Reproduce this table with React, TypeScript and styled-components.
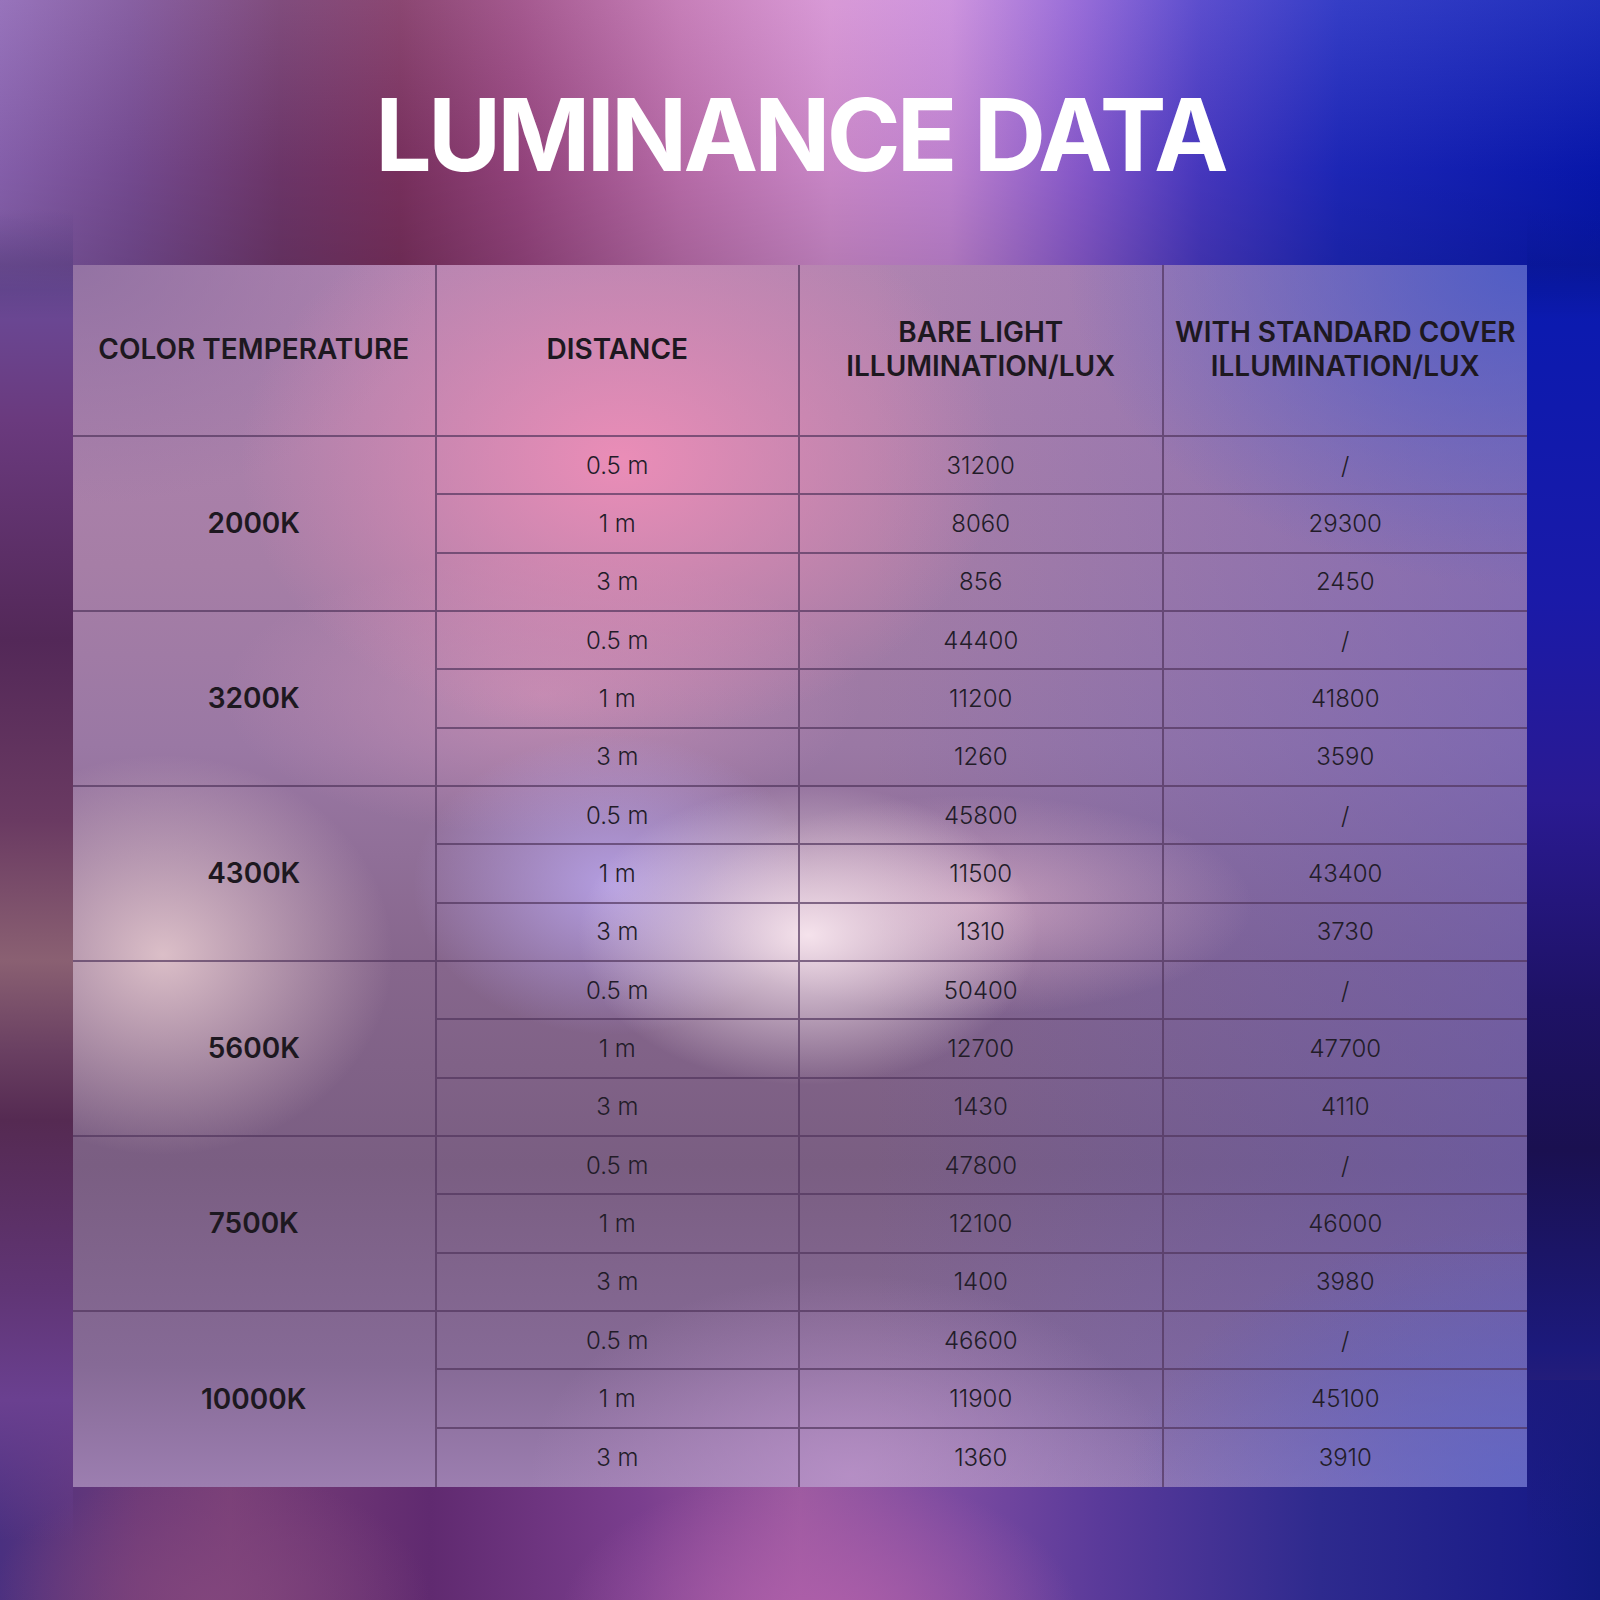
import React from 'react';
import styled, { createGlobalStyle } from 'styled-components';

const GlobalStyle = createGlobalStyle`
    html, body {
        margin: 0;
        padding: 0;
    }
    body {
        font-family: Inter, "Noto Sans", "Liberation Sans", sans-serif;
        color: #1f1a24;
    }
`;

// 背景：顶部横向彩带 + 左右两侧竖条 + 底部横带
const Page = styled.div`
    width: 1600px;
    height: 1600px;
    box-sizing: border-box;
    padding-top: 85px;
    display: flex;
    flex-direction: column;
    align-items: center;
    background:
        linear-gradient(180deg, rgba(255, 255, 255, 0.1) 0px, rgba(0, 0, 0, 0.06) 170px, rgba(0, 0, 0, 0.14) 265px, rgba(0, 0, 0, 0) 320px),
        linear-gradient(180deg, rgba(106, 74, 152, 0) 0 210px, #6a4a98 290px, #6a3a7e 420px, #532858 640px, #6a3a62 820px, #8a6072 960px, #6a4062 1050px, #552a52 1120px, #603575 1290px, #6a4090 1400px, rgba(90, 58, 134, 0) 1540px) left top / 73px 100% no-repeat,
        linear-gradient(180deg, rgba(10, 26, 176, 0) 0 210px, #0a1ab0 290px, #1a1aa8 600px, #2a1a92 800px, #1e1266 1000px, #1a1050 1150px, #1c1a7c 1350px, rgba(26, 32, 144, 0) 1540px) right top / 73px 100% no-repeat,
        radial-gradient(ellipse 260px 150px at 820px 1620px, rgba(175, 95, 170, 0.95), transparent),
        radial-gradient(ellipse 220px 130px at 210px 1600px, rgba(130, 70, 125, 0.9), transparent),
        linear-gradient(90deg, #4a3080 0px, #6e3a78 140px, #7a4078 230px, #602a70 430px, #7a3e8e 640px, #9c5aa0 800px, #7a4aa0 960px, #5a3a9a 1100px, #2e2a8e 1320px, #1a1c88 1530px, #121a80 1600px) left 1380px / 100% 220px no-repeat,
        linear-gradient(90deg, #8c64b4 0px, #7a4e98 130px, #72386e 280px, #7e3262 400px, #9a4682 520px, #c070b0 680px, #d48ed2 830px, #c888da 950px, #8c5cd4 1080px, #4a3ac8 1200px, #1e28c0 1340px, #0818b4 1600px) left top / 100% 320px no-repeat,
        #4a2a70;
`;

const Title = styled.h1`
    margin: 0 0 80px;
    font-family: Inter, "Liberation Sans", sans-serif;
    font-weight: 700;
    font-size: 100px;
    line-height: 1;
    letter-spacing: -3.8px;
    color: #ffffff;
    text-align: center;
`;

// 毛玻璃表格，颜色光斑直接画在表格背景上
const Table = styled.div`
    width: 1454px;
    display: grid;
    grid-template-columns: repeat(4, 1fr);
    grid-template-rows: 172px repeat(18, 58.33px);
    background:
        radial-gradient(ellipse 230px 150px at 735px 670px, rgba(250, 232, 240, 0.95), transparent),
        radial-gradient(ellipse 280px 110px at 900px 640px, rgba(236, 190, 212, 0.6), transparent),
        radial-gradient(ellipse 200px 150px at 540px 620px, rgba(186, 166, 238, 0.85), transparent),
        radial-gradient(ellipse 230px 200px at 90px 690px, rgba(234, 206, 210, 0.85), transparent),
        radial-gradient(ellipse 380px 280px at 547px 195px, rgba(238, 142, 184, 0.95), transparent),
        radial-gradient(ellipse 320px 140px at 470px 430px, rgba(214, 150, 186, 0.6), transparent),
        radial-gradient(ellipse 360px 240px at 0px 0px, rgba(140, 110, 160, 0.8), transparent),
        radial-gradient(ellipse 320px 200px at 777px 1210px, rgba(192, 150, 206, 0.7), transparent),
        radial-gradient(ellipse 460px 320px at 1454px 0px, rgba(70, 90, 200, 0.85), transparent),
        radial-gradient(ellipse 400px 260px at 1454px 1222px, rgba(88, 100, 200, 0.75), transparent),
        linear-gradient(90deg, transparent 55%, rgba(92, 86, 190, 0.45) 100%),
        linear-gradient(180deg, #b084b0 0px, #a67ea6 300px, #9a78a4 480px, #86668c 700px, #7a5e82 900px, #866a96 1100px, #9c7eb0 1222px);
`;

const Cell = styled.div<{ $right?: boolean; $bottom?: boolean }>`
    display: flex;
    align-items: center;
    justify-content: center;
    text-align: center;
    box-sizing: border-box;
    border-right: ${(p) => (p.$right ? 'none' : '2px solid rgba(80, 52, 92, 0.68)')};
    border-bottom: ${(p) => (p.$bottom ? 'none' : '2px solid rgba(80, 52, 92, 0.68)')};
`;

const HeadCell = styled(Cell)`
    font-weight: 600;
    font-size: 28px;
    line-height: 34px;
    color: #1d1820;
    padding-bottom: 2px;
`;

const TempCell = styled(Cell)<{ $row: number }>`
    grid-column: 1;
    grid-row: ${(p) => p.$row} / span 3;
    font-weight: 600;
    font-size: 28px;
    color: #1d1820;
`;

const DataCell = styled(Cell)`
    font-weight: 300;
    font-size: 24px;
    color: #221c28;
`;

type Group = {
    temp: string;
    rows: [string, string, string][];
};

const groups: Group[] = [
    { temp: '2000K', rows: [['0.5 m', '31200', '/'], ['1 m', '8060', '29300'], ['3 m', '856', '2450']] },
    { temp: '3200K', rows: [['0.5 m', '44400', '/'], ['1 m', '11200', '41800'], ['3 m', '1260', '3590']] },
    { temp: '4300K', rows: [['0.5 m', '45800', '/'], ['1 m', '11500', '43400'], ['3 m', '1310', '3730']] },
    { temp: '5600K', rows: [['0.5 m', '50400', '/'], ['1 m', '12700', '47700'], ['3 m', '1430', '4110']] },
    { temp: '7500K', rows: [['0.5 m', '47800', '/'], ['1 m', '12100', '46000'], ['3 m', '1400', '3980']] },
    { temp: '10000K', rows: [['0.5 m', '46600', '/'], ['1 m', '11900', '45100'], ['3 m', '1360', '3910']] },
];

export default function App() {
    return (
        <>
            <GlobalStyle />
            <Page>
                <Title>LUMINANCE DATA</Title>
                <Table>
                    <HeadCell>COLOR TEMPERATURE</HeadCell>
                    <HeadCell>DISTANCE</HeadCell>
                    <HeadCell>
                        BARE LIGHT
                        <br />
                        ILLUMINATION/LUX
                    </HeadCell>
                    <HeadCell $right>
                        WITH STANDARD COVER
                        <br />
                        ILLUMINATION/LUX
                    </HeadCell>
                    {groups.map((g, gi) => {
                        const lastGroup = gi === groups.length - 1;
                        return (
                            <React.Fragment key={g.temp}>
                                <TempCell $row={2 + gi * 3} $bottom={lastGroup}>
                                    {g.temp}
                                </TempCell>
                                {g.rows.map((r, ri) => {
                                    const bottom = lastGroup && ri === 2;
                                    return (
                                        <React.Fragment key={ri}>
                                            <DataCell $bottom={bottom}>{r[0]}</DataCell>
                                            <DataCell $bottom={bottom}>{r[1]}</DataCell>
                                            <DataCell $bottom={bottom} $right>
                                                {r[2]}
                                            </DataCell>
                                        </React.Fragment>
                                    );
                                })}
                            </React.Fragment>
                        );
                    })}
                </Table>
            </Page>
        </>
    );
}
